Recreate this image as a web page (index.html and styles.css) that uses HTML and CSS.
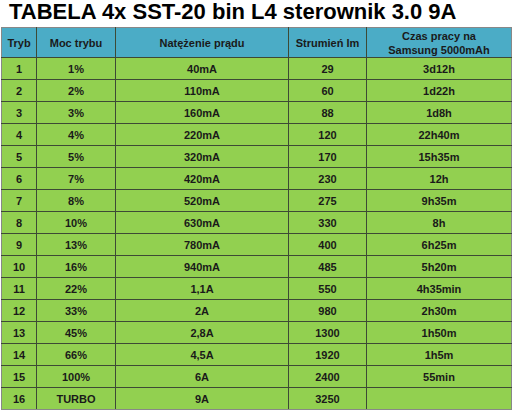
FILE: index.html
```html
<!DOCTYPE html>
<html>
<head>
<meta charset="utf-8">
<link rel="stylesheet" href="styles.css">
</head>
<body>
<h1 class="title">TABELA 4x SST-20 bin L4 sterownik 3.0 9A</h1>
<table class="tbl">
<colgroup>
<col class="c1"><col class="c2"><col class="c3"><col class="c4"><col class="c5">
</colgroup>
<thead>
<tr><th>Tryb</th><th>Moc trybu</th><th>Natężenie prądu</th><th>Strumień lm</th><th>Czas pracy na<br>Samsung 5000mAh</th></tr>
</thead>
<tbody>
<tr><td>1</td><td>1%</td><td>40mA</td><td>29</td><td>3d12h</td></tr>
<tr><td>2</td><td>2%</td><td>110mA</td><td>60</td><td>1d22h</td></tr>
<tr><td>3</td><td>3%</td><td>160mA</td><td>88</td><td>1d8h</td></tr>
<tr><td>4</td><td>4%</td><td>220mA</td><td>120</td><td>22h40m</td></tr>
<tr><td>5</td><td>5%</td><td>320mA</td><td>170</td><td>15h35m</td></tr>
<tr><td>6</td><td>7%</td><td>420mA</td><td>230</td><td>12h</td></tr>
<tr><td>7</td><td>8%</td><td>520mA</td><td>275</td><td>9h35m</td></tr>
<tr><td>8</td><td>10%</td><td>630mA</td><td>330</td><td>8h</td></tr>
<tr><td>9</td><td>13%</td><td>780mA</td><td>400</td><td>6h25m</td></tr>
<tr><td>10</td><td>16%</td><td>940mA</td><td>485</td><td>5h20m</td></tr>
<tr><td>11</td><td>22%</td><td>1,1A</td><td>550</td><td>4h35min</td></tr>
<tr><td>12</td><td>33%</td><td>2A</td><td>980</td><td>2h30m</td></tr>
<tr><td>13</td><td>45%</td><td>2,8A</td><td>1300</td><td>1h50m</td></tr>
<tr><td>14</td><td>66%</td><td>4,5A</td><td>1920</td><td>1h5m</td></tr>
<tr><td>15</td><td>100%</td><td>6A</td><td>2400</td><td>55min</td></tr>
<tr><td>16</td><td>TURBO</td><td>9A</td><td>3250</td><td></td></tr>
</tbody>
</table>
</body>
</html>
```
FILE: styles.css
```css
html, body {
  margin: 0;
  padding: 0;
  background: #ffffff;
}
body {
  font-family: "Liberation Sans", Arial, sans-serif;
  color: #1a1a1a;
}
.title {
  margin: 0;
  padding: 0 0 0 9px;
  height: 27px;
  font-size: 22px;
  line-height: 24px;
  font-weight: bold;
  color: #000;
  white-space: nowrap;
}
.tbl {
  margin-left: 1px;
  border-collapse: collapse;
  table-layout: fixed;
  width: 510px;
  font-size: 11px;
  font-weight: bold;
}
.c1 { width: 35px; }
.c2 { width: 79px; }
.c3 { width: 173px; }
.c4 { width: 78px; }
.c5 { width: 145px; }
.tbl th, .tbl td {
  border: 1px solid #3d4a35;
  text-align: center;
  padding: 0;
}
.tbl th {
  background: #4bacc6;
  height: 29px;
  line-height: 14px;
  color: #1a1a1a;
}
.tbl td {
  background: #92d050;
  height: 21px;
}
.tbl tr > :first-child { border-left-color: #888; }
.tbl tr > :last-child { border-right-color: #888; }
.tbl thead th { border-top-color: #888; }
.tbl tbody tr:last-child td { border-bottom-color: #888; }
```
